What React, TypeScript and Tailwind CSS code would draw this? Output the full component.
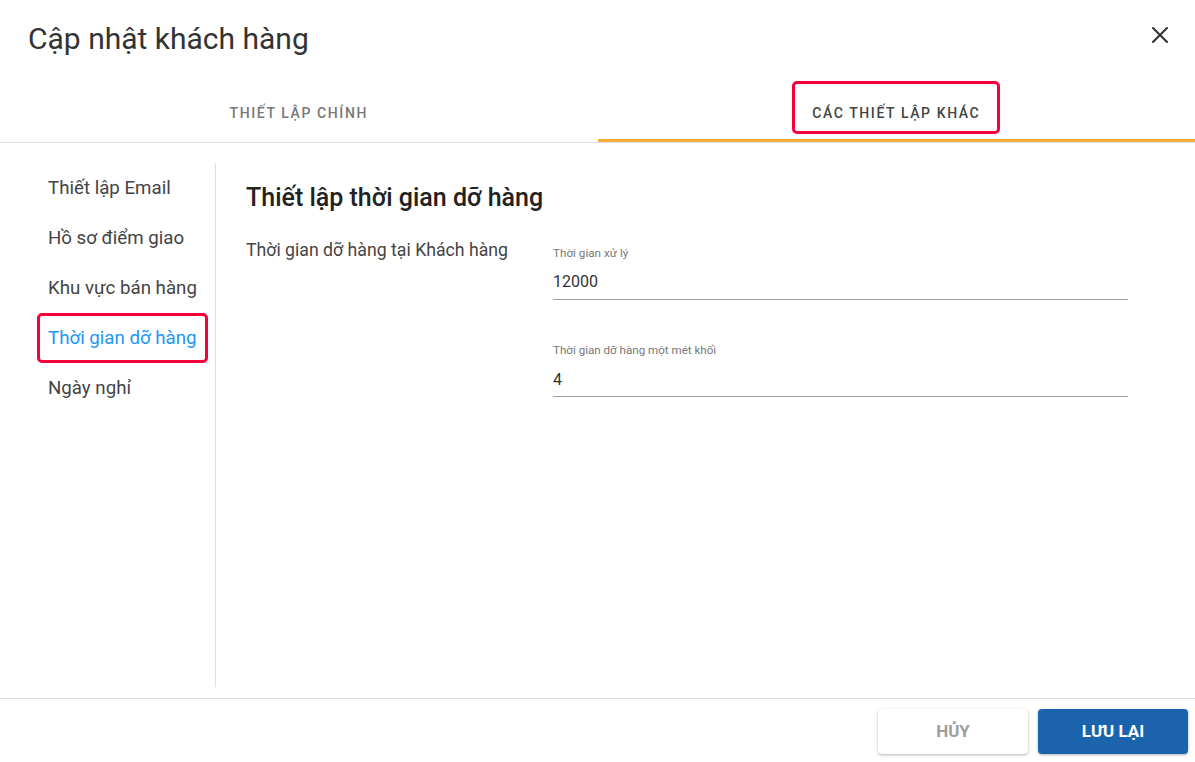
import { X } from "lucide-react";

const menuItems = [
  "Thiết lập Email",
  "Hồ sơ điểm giao",
  "Khu vực bán hàng",
  "Thời gian dỡ hàng",
  "Ngày nghỉ",
];

const tabs = [
  { label: "THIẾT LẬP CHÍNH", active: false },
  { label: "CÁC THIẾT LẬP KHÁC", active: true },
];

export default function App() {
  const activeMenu = "Thời gian dỡ hàng";

  return (
    <div className="w-[1195px] h-[762px] bg-white flex flex-col font-['Roboto',sans-serif] overflow-hidden">
      {/* Header */}
      <div className="h-[80px] flex items-center justify-between pl-[28px] pr-[21px] pb-[2px]">
        <h1 className="text-[30px] leading-[38px] text-[#333333]">Cập nhật khách hàng</h1>
        <button className="text-[#333333] -mt-[8px]">
          <X size={28} strokeWidth={1.8} />
        </button>
      </div>

      {/* Tabs */}
      <div className="flex h-[63px] border-b border-[#e0e0e0]">
        {tabs.map((tab) => (
          <div key={tab.label} className="relative flex-1 flex justify-center items-start pt-[1px]">
            <div
              className={`h-[53px] px-[17px] pt-[17px] border-[3px] rounded-[5px] ${
                tab.active ? "border-[#f5003a]" : "border-transparent"
              }`}
            >
              <span
                className={`text-[14px] leading-[20px] font-medium tracking-[1.6px] ${
                  tab.active ? "text-[#444444]" : "text-[#777777]"
                }`}
              >
                {tab.label}
              </span>
            </div>
            {tab.active && <div className="absolute left-0 right-0 bottom-0 h-[3px] bg-[#f6ad3a]" />}
          </div>
        ))}
      </div>

      {/* Body */}
      <div className="flex flex-1 pt-[20px] pb-[11px]">
        <div className="w-[216px] border-r border-[#e0e0e0] shrink-0">
          {menuItems.map((item) => {
            const active = item === activeMenu;
            return (
              <div
                key={item}
                className={`ml-[37px] w-[171px] h-[50px] flex items-center pl-[8px] border-[3px] rounded-[5px] text-[18.7px] whitespace-nowrap ${
                  active ? "border-[#f5003a] text-[#2196f3]" : "border-transparent text-[#444444]"
                }`}
              >
                {item}
              </div>
            );
          })}
        </div>

        <div className="flex-1 pl-[30px] pt-[20px]">
          <h2 className="text-[25px] leading-[30px] font-medium text-[#222222]">Thiết lập thời gian dỡ hàng</h2>
          <div className="flex mt-[25px]">
            <div className="w-[307px] text-[17.7px] leading-[24px] text-[#444444]">Thời gian dỡ hàng tại Khách hàng</div>
            <div className="w-[575px] pt-[7px]">
              <div className="text-[11.7px] leading-[16px] text-[#777777]">Thời gian xử lý</div>
              <div className="mt-[9px] pb-[5px] border-b border-[#9e9e9e] text-[16px] leading-[24px] text-[#333333]">
                12000
              </div>
              <div className="mt-[42px] text-[11.6px] leading-[16px] text-[#777777]">Thời gian dỡ hàng một mét khối</div>
              <div className="mt-[10px] pb-[4px] border-b border-[#9e9e9e] text-[16px] leading-[24px] text-[#333333]">
                4
              </div>
            </div>
          </div>
        </div>
      </div>

      {/* Footer */}
      <div className="h-[64px] border-t border-[#e0e0e0] flex justify-end items-start pt-[10px] pr-[7px] gap-[10px]">
        <button className="w-[150px] h-[45px] rounded-[4px] bg-white shadow-[0_1px_3px_rgba(0,0,0,0.3)] text-[17px] font-bold text-[#9e9e9e]">
          HỦY
        </button>
        <button className="w-[150px] h-[45px] rounded-[4px] bg-[#1c63ae] shadow-[0_1px_3px_rgba(0,0,0,0.3)] text-[17px] font-bold text-white">
          LƯU LẠI
        </button>
      </div>
    </div>
  );
}
